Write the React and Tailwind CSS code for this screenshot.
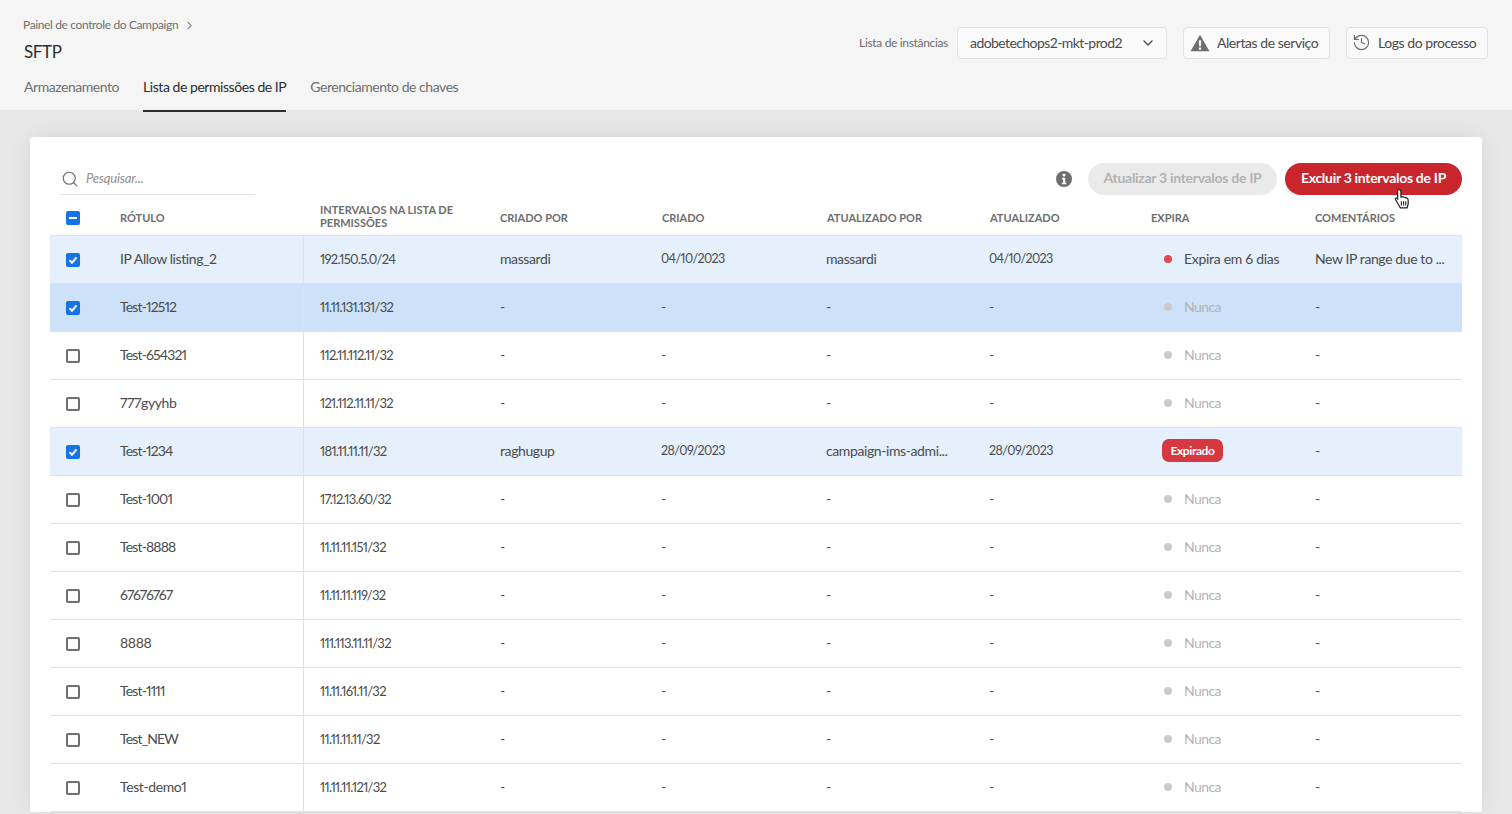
import React from 'react';
import { ChevronDown, ChevronRight, History, Search } from 'lucide-react';

const rows = [
  { label: 'IP Allow listing_2', ip: '192.150.5.0/24', by: 'massardi', created: '04/10/2023', updatedBy: 'massardi', updated: '04/10/2023', expires: 'soon', comment: 'New IP range due to ...', checked: true, tone: 'selected' },
  { label: 'Test-12512', ip: '11.11.131.131/32', checked: true, tone: 'hover', tight: true },
  { label: 'Test-654321', ip: '112.11.112.11/32', tight: true },
  { label: '777gyyhb', ip: '121.112.11.11/32' },
  { label: 'Test-1234', ip: '181.11.11.11/32', by: 'raghugup', created: '28/09/2023', updatedBy: 'campaign-ims-admi...', updated: '28/09/2023', expires: 'expired', checked: true, tone: 'selected', tight: true },
  { label: 'Test-1001', ip: '17.12.13.60/32', tight: true },
  { label: 'Test-8888', ip: '11.11.11.151/32', tight: true },
  { label: '67676767', ip: '11.11.11.119/32', tight: true },
  { label: '8888', ip: '111.113.11.11/32' },
  { label: 'Test-1111', ip: '11.11.161.11/32', tight: true },
  { label: 'Test_NEW', ip: '11.11.11.11/32', tight: true },
  { label: 'Test-demo1', ip: '11.11.11.121/32' },
];

const gridCols = 'grid grid-cols-[70px_184px_179px_162px_165px_163px_161px_164px_164px]';

const Checkbox = ({ checked, partial }) => {
  if (partial) {
    return (
      <span className="flex h-[14px] w-[14px] items-center justify-center rounded-[2px] bg-[#1473e6]">
        <span className="h-[2px] w-[8px] bg-white" />
      </span>
    );
  }
  if (checked) {
    return (
      <span className="flex h-[14px] w-[14px] items-center justify-center rounded-[2px] bg-[#1473e6]">
        <svg width="10" height="10" viewBox="0 0 10 10" fill="none">
          <path d="M1.5 5.2 4 7.8 8.5 2.4" stroke="white" strokeWidth="2" />
        </svg>
      </span>
    );
  }
  return <span className="h-[14px] w-[14px] rounded-[2px] border-2 border-[#707070] bg-white" />;
};

const Expires = ({ value }) => {
  if (value === 'expired') {
    return (
      <span className="ml-[11px] flex h-[23px] w-[61px] items-center justify-center rounded-[7px] bg-[#d7373f] text-[12px] font-bold text-white">
        Expirado
      </span>
    );
  }
  if (value === 'soon') {
    return (
      <span className="ml-[13px] flex items-center gap-[12px] tracking-[-0.3px] text-[#4b4b4b]">
        <span className="h-2 w-2 rounded-full bg-[#e34850]" />
        Expira em 6 dias
      </span>
    );
  }
  return (
    <span className="ml-[13px] flex items-center gap-[12px] tracking-[-0.6px] text-[#b3b3b3]">
      <span className="h-2 w-2 rounded-full bg-[#cacaca]" />
      Nunca
    </span>
  );
};

const DateCell = ({ value }) => (
  <div className={`pl-[16px] ${value ? 'pb-[1px] text-[12.5px] tracking-[-0.6px]' : 'pb-[2px]'}`}>{value || '-'}</div>
);

const Row = ({ row }) => {
  const bg = row.tone === 'selected' ? 'bg-[#e5f0fc]' : row.tone === 'hover' ? 'bg-[#cde1f8]' : 'bg-white';
  return (
    <div className={`${gridCols} h-[48px] items-center border-b border-[#e1e1e1] text-[14px] leading-[18px] tracking-[-0.4px] text-[#4b4b4b] [font-variant-numeric:proportional-nums] ${bg}`}>
      <div className="flex h-full items-center pl-4">
        <Checkbox checked={row.checked} />
      </div>
      <div className={`flex h-full items-center border-r border-[#e1e1e1] pb-[2px] ${row.tight ? 'tracking-[-0.85px]' : ''}`}>
        {row.label}
      </div>
      <div className="pb-[2px] pl-[16px] text-[13px] tracking-[-0.7px]">{row.ip}</div>
      <div className="pb-[2px] pl-[17px]">{row.by || '-'}</div>
      <DateCell value={row.created} />
      <div className="pb-[2px] pl-[16px]">{row.updatedBy || '-'}</div>
      <DateCell value={row.updated} />
      <div className="pb-[2px] pl-[17px]">
        <Expires value={row.expires} />
      </div>
      <div className="pb-[2px] pl-[17px]">{row.comment || '-'}</div>
    </div>
  );
};

const HeadCell = ({ children, className = '' }) => (
  <div className={`text-[11px] font-bold uppercase leading-[13px] text-[#6e6e6e] ${className}`}>
    {children}
  </div>
);

export default function App() {
  return (
    <div className="relative h-screen overflow-hidden bg-[#e8e8e8] font-['Lato',sans-serif]">
      <header className="flex h-[110px] justify-between bg-[#f5f5f5] pl-6 pr-6">
        <div>
          <div className="-ml-px flex items-center gap-[5px] pt-[17px] text-[12px] leading-4 tracking-[-0.37px] text-[#6e6e6e]">
            Painel de controle do Campaign
            <ChevronRight size={13} className="text-[#8e8e8e]" />
          </div>
          <h1 className="mt-[7px] text-[17px] leading-6 tracking-[-0.4px] text-[#2c2c2c]">SFTP</h1>
          <nav className="mt-[13px] flex gap-6 text-[14px] tracking-[-0.45px] text-[#6e6e6e]">
            <a className="h-[35px] leading-5">Armazenamento</a>
            <a className="h-[35px] border-b-2 border-[#2c2c2c] leading-5 text-[#2c2c2c]">Lista de permissões de IP</a>
            <a className="h-[35px] leading-5">Gerenciamento de chaves</a>
          </nav>
        </div>
        <div className="flex h-[33px] translate-y-[26px] items-center text-[14px] tracking-[-0.45px] text-[#4b4b4b]">
          <span className="mr-[9px] text-[12px] tracking-[-0.33px] text-[#6e6e6e]">Lista de instâncias</span>
          <div className="flex h-[32px] w-[210px] items-center justify-between rounded border border-[#e1e1e1] bg-[#fafafa] pl-3 pr-[10px] tracking-[-0.58px]">
            adobetechops2-mkt-prod2
            <ChevronDown size={16} />
          </div>
          <button className="ml-4 flex h-[32px] w-[147px] items-center gap-[7px] rounded border border-[#e1e1e1] bg-[#fafafa] pl-[6px]">
            <svg width="20" height="20" viewBox="0 0 18 18">
              <path d="M9 1.5 17.5 16.5H.5Z" fill="#6e6e6e" />
              <path d="M8 6.5h2v5.5H8zM8 13h2v2H8z" fill="#fafafa" />
            </svg>
            Alertas de serviço
          </button>
          <button className="ml-4 flex h-[32px] w-[142px] items-center gap-[7px] rounded border border-[#e1e1e1] bg-[#fafafa] pl-[5px]">
            <History size={19} strokeWidth={1.5} className="text-[#6e6e6e]" />
            Logs do processo
          </button>
        </div>
      </header>

      <main className="mx-[30px] mt-[27px] rounded-t bg-white px-5 pt-[26px] shadow-[0_0_24px_rgba(0,0,0,0.08)]">
        <div className="flex h-[32px] items-center justify-between">
          <div className="ml-[10px] flex h-[32px] w-[195px] items-center gap-[7px] border-b border-[#e1e1e1] pl-[1px]">
            <Search size={18} strokeWidth={1.5} className="text-[#6e6e6e]" />
            <span className="text-[13px] italic tracking-[-0.2px] text-[#8e8e8e]">Pesquisar...</span>
          </div>
          <div className="flex items-center">
            <svg width="16" height="16" viewBox="0 0 16 16" className="mr-4">
              <circle cx="8" cy="8" r="8" fill="#6e6e6e" />
              <circle cx="8" cy="4" r="1.5" fill="white" />
              <path d="M6 6.8h3.2v5H10.4v1.4H5.8v-1.4H7V8.2H6Z" fill="white" />
            </svg>
            <button className="flex h-[32px] w-[189px] items-center justify-center rounded-full bg-[#eaeaea] pb-[3px] text-[14px] font-bold tracking-[-0.3px] text-[#b3b3b3]">
              Atualizar 3 intervalos de IP
            </button>
            <button className="ml-2 flex h-[32px] w-[177px] items-center justify-center rounded-full bg-[#c9252d] pb-[3px] text-[14px] font-bold tracking-[-0.3px] text-white">
              Excluir 3 intervalos de IP
            </button>
          </div>
        </div>

        <div className={`${gridCols} mt-[5px] h-[36px] items-center border-b border-[#e1e1e1]`}>
          <div className="flex items-center pl-4">
            <Checkbox partial />
          </div>
          <HeadCell>Rótulo</HeadCell>
          <HeadCell className="pb-[3px] pl-[16px]">Intervalos na lista de permissões</HeadCell>
          <HeadCell className="pl-[17px]">Criado por</HeadCell>
          <HeadCell className="pl-[17px]">Criado</HeadCell>
          <HeadCell className="pl-[17px]">Atualizado por</HeadCell>
          <HeadCell className="pl-[17px]">Atualizado</HeadCell>
          <HeadCell className="pl-[17px]">Expira</HeadCell>
          <HeadCell className="pl-[17px]">Comentários</HeadCell>
        </div>

        {rows.map((row) => (
          <Row key={row.label} row={row} />
        ))}
      </main>

      <svg width="18" height="22" viewBox="0 0 16 20" className="absolute left-[1394px] top-[188px]">
        <path
          d="M4.5 1.5c1 0 1.6.7 1.6 1.6v5l1-.2 1 .2 1 .3 1.2.3 1.2.5c.8.4 1.2 1 1.2 1.8v3.7l-1 3.3H5.6L3 13.6 1.2 10.4c-.4-.8.5-1.6 1.3-1l.6.6V3.1c0-.9.5-1.6 1.4-1.6Z"
          fill="white"
          stroke="#222"
          strokeWidth="1.1"
        />
        <path d="M6.5 12v4M8.5 12v4M10.5 12v4" stroke="#222" strokeWidth="1" />
      </svg>
    </div>
  );
}
